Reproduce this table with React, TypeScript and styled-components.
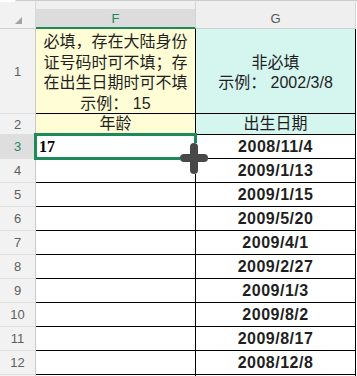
import styled, { createGlobalStyle } from 'styled-components';

const GREEN = '#1e8a5a';

const dates = [
    '2008/11/4',
    '2009/1/13',
    '2009/1/15',
    '2009/5/20',
    '2009/4/1',
    '2009/2/27',
    '2009/1/3',
    '2009/8/2',
    '2009/8/17',
    '2008/12/8',
];

const App = () => {
    return (
        <>
            <GlobalStyle />
            <Sheet>
                <TopEdge />
                <HeaderRow>
                    <Corner><SelectAll /></Corner>
                    <ColHeader $active>F</ColHeader>
                    <ColHeader>G</ColHeader>
                    <Gutter />
                </HeaderRow>

                <Row $h={85}>
                    <RowHead>1</RowHead>
                    <Cell $bg="#fefdd6">
                        <Note>
                            必填，存在大陆身份<br />
                            证号码时可不填；存<br />
                            在出生日期时可不填<br />
                            示例： 15
                        </Note>
                    </Cell>
                    <Cell $bg="#d5f5ef">
                        <Note>
                            非必填<br />
                            示例： 2002/3/8
                        </Note>
                    </Cell>
                    <Gutter />
                </Row>

                <Row $h={21}>
                    <RowHead>2</RowHead>
                    <Cell $bg="#fefdd6"><Label>年龄</Label></Cell>
                    <Cell $bg="#d5f5ef"><Label>出生日期</Label></Cell>
                    <Gutter />
                </Row>

                {dates.map((d, i) => (
                    <Row $h={24} key={d}>
                        <RowHead $active={i === 0}>{i + 3}</RowHead>
                        <Cell>
                            {i === 0 && (
                                <>
                                    <Age>17</Age>
                                    <SelectBox />
                                </>
                            )}
                        </Cell>
                        <Cell><DateText>{d}</DateText></Cell>
                        <Gutter />
                    </Row>
                ))}

                {/* row 13 only peeks in at the bottom edge */}
                <Row $h={24}>
                    <RowHead />
                    <Cell />
                    <Cell />
                    <Gutter />
                </Row>

                <MoveCursor width="28" height="31" viewBox="0 0 28 31">
                    <line x1="14" y1="4" x2="14" y2="27" stroke="#fff" strokeWidth="10" strokeLinecap="round" />
                    <line x1="4" y1="15" x2="24" y2="15" stroke="#fff" strokeWidth="10" strokeLinecap="round" />
                    <line x1="14" y1="4" x2="14" y2="27" stroke="#484848" strokeWidth="8" strokeLinecap="round" />
                    <line x1="4" y1="15" x2="24" y2="15" stroke="#484848" strokeWidth="8" strokeLinecap="round" />
                </MoveCursor>
            </Sheet>
        </>
    )
}

const GlobalStyle = createGlobalStyle`
    html, body {
        margin: 0;
        padding: 0;
        background: #ffffff;
        overflow: hidden;
    }
    body {
        font-family: "Liberation Sans", "Noto Sans CJK SC", sans-serif;
        color: #1f1f1f;
    }
`

const Sheet = styled.div`
    position: relative;
    width: 357px;
    height: 376px;
    overflow: hidden;
    background: #ffffff;
`

const TopEdge = styled.div`
    height: 1px;
    margin-left: 15px;
    border-top: 1px solid #cccccc;
    border-top-left-radius: 4px;
    background: #efefef;
`

const HeaderRow = styled.div`
    display: flex;
    height: 27px;
    background: #efefef;
`

const Corner = styled.div`
    box-sizing: border-box;
    width: 36px;
    padding: 15px 0 0 15px;
    background: #f2f2f2;
    border-right: 1px solid #d6d6d6;
    border-bottom: 1px solid #d0d0d0;
`

const SelectAll = styled.div`
    width: 0;
    height: 0;
    border-left: 7px solid transparent;
    border-bottom: 7px solid #a3a3a3;
`

const ColHeader = styled.div<{ $active?: boolean }>`
    box-sizing: border-box;
    width: 160px;
    display: flex;
    align-items: center;
    justify-content: center;
    padding-top: 7px;
    font-size: 13px;
    color: ${p => (p.$active ? GREEN : '#555555')};
    background: ${p => (p.$active ? 'linear-gradient(#efefef 7px, #dcdcdc 7px)' : '#efefef')};
    border-right: 1px solid #d3d3d3;
    border-bottom: ${p => (p.$active ? `2px solid ${GREEN}` : '1px solid #cfcfcf')};
`

const Gutter = styled.div`
    width: 1px;
    background: #ffffff;
`

const Row = styled.div<{ $h: number }>`
    display: flex;
    height: ${p => p.$h}px;
`

const RowHead = styled.div<{ $active?: boolean }>`
    box-sizing: border-box;
    width: 36px;
    display: flex;
    align-items: center;
    justify-content: center;
    font-size: 13px;
    color: ${p => (p.$active ? GREEN : '#5f5f5f')};
    background: ${p => (p.$active ? '#dedede' : '#f2f2f2')};
    border-right: 1px solid #c9c9c9;
    border-bottom: 1px solid #dedede;
`

const Cell = styled.div<{ $bg?: string }>`
    position: relative;
    box-sizing: border-box;
    width: 160px;
    display: flex;
    align-items: center;
    justify-content: center;
    background: ${p => p.$bg || '#ffffff'};
    border-right: 1px solid #000000;
    border-bottom: 1px solid #000000;
`

const Note = styled.div`
    font-size: 16px;
    line-height: 20.5px;
    text-align: center;
    padding-top: 4px;
`

const Label = styled.div`
    font-size: 16px;
    line-height: 20px;
`

const Age = styled.div`
    flex: 1;
    padding-left: 3px;
    font-family: "Liberation Serif", serif;
    font-weight: 700;
    font-size: 16px;
    color: #000000;
`

const DateText = styled.div`
    font-size: 16px;
    font-weight: 700;
    letter-spacing: 0.5px;
`

const SelectBox = styled.div`
    position: absolute;
    z-index: 2;
    top: -2px;
    left: -2px;
    right: -2px;
    bottom: -2px;
    border: 3px solid ${GREEN};
    pointer-events: none;
`

const MoveCursor = styled.svg`
    position: absolute;
    z-index: 3;
    left: 180px;
    top: 143px;
`

export default App;
